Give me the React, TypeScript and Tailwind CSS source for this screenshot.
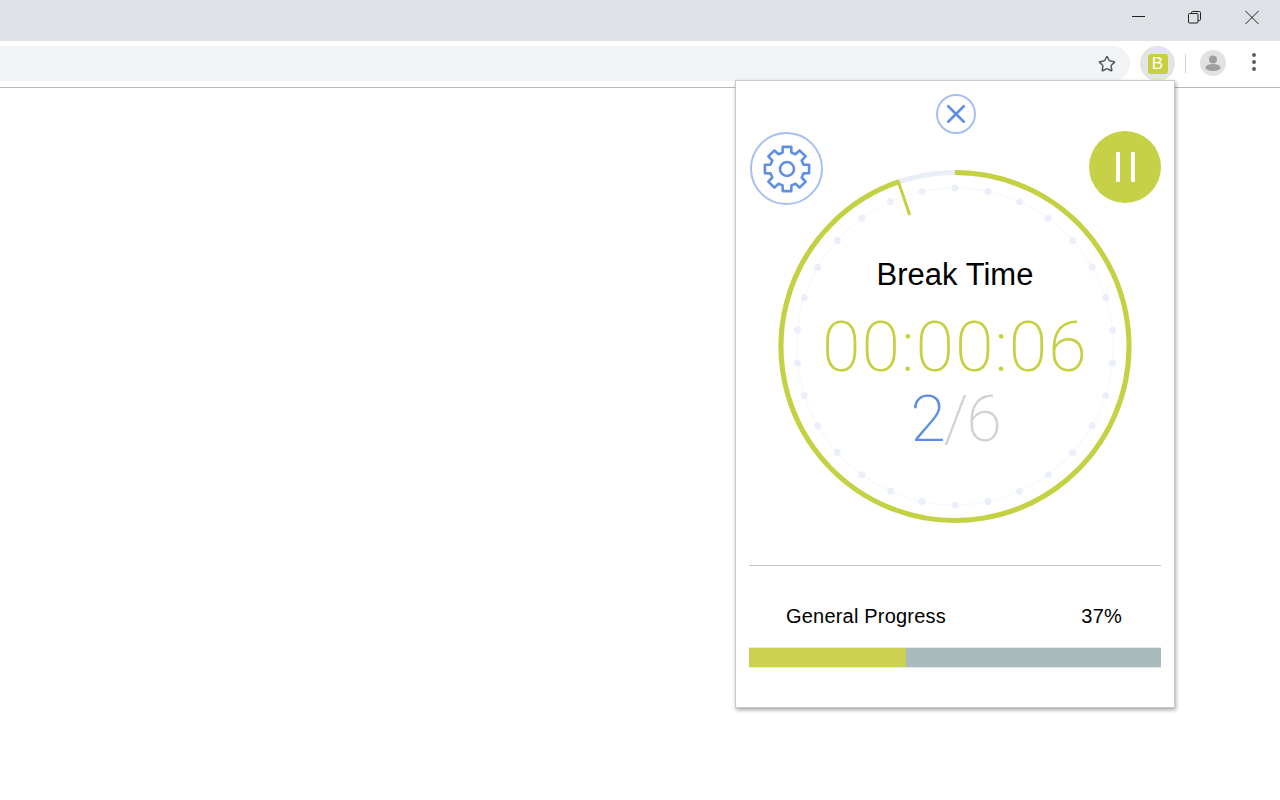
import { Star } from "lucide-react";

const cx = 180;
const cy = 180.5;

// 30 tick dots round the dial
const dots = Array.from({ length: 30 }, (_, i) => {
  const a = (i * 12 * Math.PI) / 180;
  return { x: cx + 158.5 * Math.sin(a), y: cy - 158.5 * Math.cos(a) };
});

function polar(r: number, deg: number) {
  const a = (deg * Math.PI) / 180;
  return `${(cx + r * Math.sin(a)).toFixed(2)} ${(cy - r * Math.cos(a)).toFixed(2)}`;
}

function gearPath() {
  const c = 24;
  const pts: string[] = [];
  for (let i = 0; i < 8; i++) {
    const t = i * 45;
    const p = (r: number, d: number) => {
      const a = ((t + d) * Math.PI) / 180;
      return `${(c + r * Math.sin(a)).toFixed(2)} ${(c - r * Math.cos(a)).toFixed(2)}`;
    };
    pts.push(p(17, -15), p(22.5, -11), p(22.5, 11), p(17, 15));
  }
  return "M" + pts.join("L") + "Z";
}

function WindowControls() {
  return (
    <div className="h-[41px] bg-[#dee1e6] flex justify-end items-start">
      <div className="flex items-center mt-[11px] mr-[21px] gap-[43px]">
        <svg width="14" height="14" viewBox="0 0 14 14" className="text-[#222]">
          <path d="M1 5.5H14" stroke="currentColor" strokeWidth="1" />
        </svg>
        <svg width="14" height="14" viewBox="0 0 14 14" className="text-[#222]">
          <path d="M3.5 2.5V1.5a1 1 0 0 1 1-1h7a1 1 0 0 1 1 1v7a1 1 0 0 1-1 1H10" fill="none" stroke="currentColor" />
          <rect x="0.5" y="2.5" width="9.5" height="9.5" rx="1" fill="none" stroke="currentColor" />
        </svg>
        <svg width="14" height="14" viewBox="0 0 14 14" className="text-[#222]">
          <path d="M0.5 0L13.5 13M13.5 0L0.5 13" stroke="currentColor" strokeWidth="1" />
        </svg>
      </div>
    </div>
  );
}

function Toolbar() {
  return (
    <div className="h-[47px] bg-white border-b border-[#b8b8b8] flex items-start">
      <div className="w-[1130px] h-[35px] mt-[5px] bg-[#f1f3f4] rounded-r-full flex items-center justify-end pr-[14px]">
        <Star className="w-[18px] h-[18px] text-[#55585c]" strokeWidth={2} />
      </div>
      <div className="ml-[10px] mt-[5px] w-[35px] h-[35px] rounded-full bg-[#e3e4e5] flex items-center justify-center">
        <div className="w-[20px] h-[20px] rounded-[3px] bg-[#c6d041] text-white flex items-center justify-center text-[17px] leading-none font-['Liberation_Sans',sans-serif]">
          B
        </div>
      </div>
      <div className="ml-[10px] mt-[13px] w-px h-[19px] bg-[#d0d2d4]" />
      <div className="ml-[14px] mt-[9px] w-[26px] h-[26px] rounded-full bg-[#e2e2e2] flex items-center justify-center">
        <svg width="26" height="26" viewBox="0 0 26 26" className="text-[#9f9f9f]">
          <circle cx="13" cy="9.5" r="4" fill="currentColor" />
          <ellipse cx="13" cy="17.5" rx="7.5" ry="3.6" fill="currentColor" />
        </svg>
      </div>
      <div className="ml-[26px] mt-[9px] flex flex-col gap-[3px] pt-[3px]">
        <div className="w-1 h-1 rounded-full bg-[#5b5e62]" />
        <div className="w-1 h-1 rounded-full bg-[#5b5e62]" />
        <div className="w-1 h-1 rounded-full bg-[#5b5e62]" />
      </div>
    </div>
  );
}

function Dial() {
  return (
    <svg width="360" height="360" viewBox="0 0 360 360" className="absolute inset-0">
      <circle cx={cx} cy={cy} r="158.5" fill="none" stroke="#f8f9fe" strokeWidth="1.5" />
      {dots.map((d, i) => (
        <circle key={i} cx={d.x} cy={d.y} r="3.5" fill="#ebeffb" />
      ))}
      <circle cx={cx} cy={cy} r="174" fill="none" stroke="#e9eefa" strokeWidth="5" />
      <path
        d={`M${polar(174, 0)}A174 174 0 1 1 ${polar(174, 341)}`}
        fill="none"
        stroke="#c4d140"
        strokeWidth="5"
      />
      <path d={`M${polar(176, 341)}L${polar(139, 341)}`} stroke="#c4d140" strokeWidth="3" />
    </svg>
  );
}

function Popup() {
  return (
    <div className="absolute left-[735px] top-[80px] w-[440px] h-[628px] bg-white border border-[#c9c9c9] shadow-[1px_2px_4px_rgba(0,0,0,0.35)] px-[13px] font-['Liberation_Sans',sans-serif]">
      <div className="flex justify-center pt-[13px] pl-[2px]">
        <button className="w-10 h-10 rounded-full border-2 border-[#a6c0f2] flex items-center justify-center text-[#5f8fe4]">
          <svg width="22" height="22" viewBox="0 0 22 22">
            <path d="M2.5 2.5L19.5 19.5M19.5 2.5L2.5 19.5" stroke="currentColor" strokeWidth="2.6" />
          </svg>
        </button>
      </div>
      <div className="flex justify-between items-start -mt-[2px]">
        <button className="w-[73px] h-[73px] ml-px rounded-full border-2 border-[#a6c0f2] flex items-center justify-center">
          <svg width="48" height="48" viewBox="0 0 48 48" className="text-[#5f8fe4]">
            <path d={gearPath()} fill="none" stroke="currentColor" strokeWidth="2.6" strokeLinejoin="round" />
            <circle cx="24" cy="24" r="7" fill="none" stroke="currentColor" strokeWidth="2.6" />
          </svg>
        </button>
        <button className="w-[72px] h-[72px] -mt-px rounded-full bg-[#c7d147] flex items-center justify-center gap-[11px]">
          <span className="w-1 h-[30px] rounded-[1px] bg-white" />
          <span className="w-1 h-[30px] rounded-[1px] bg-white" />
        </button>
      </div>
      <div className="relative w-[360px] h-[360px] mx-auto -mt-[39px] flex flex-col items-center">
        <Dial />
        <div className="relative mt-[89px] text-[31px] leading-[40px] text-black">Break Time</div>
        <div className="relative mt-[10px] text-[70px] leading-[84px] text-[#c6d041] font-['Roboto',sans-serif] font-extralight tracking-[1px]">
          00:00:06
        </div>
        <div className="relative -mt-[5px] text-[64px] leading-[72px] font-['Roboto',sans-serif] font-extralight tracking-[-2px]">
          <span className="text-[#5b8de6]">2</span>
          <span className="text-[#d2d2d2]">/6</span>
        </div>
      </div>
      <div className="mt-[39px] h-px bg-[#bcc9cb]" />
      <div className="flex justify-between items-center h-[26px] mt-[37px] pl-[37px] pr-[39px] text-[20px] tracking-[0.2px] text-black">
        <span>General Progress</span>
        <span>37%</span>
      </div>
      <div className="mt-[18px] h-[21px] bg-[#a9babd] border-y border-[#e3e8e8]">
        <div className="h-full bg-[#cbd252]" style={{ width: "38%" }} />
      </div>
    </div>
  );
}

export default function App() {
  return (
    <div className="relative w-[1280px] h-[800px] overflow-hidden bg-white">
      <WindowControls />
      <Toolbar />
      <Popup />
    </div>
  );
}
